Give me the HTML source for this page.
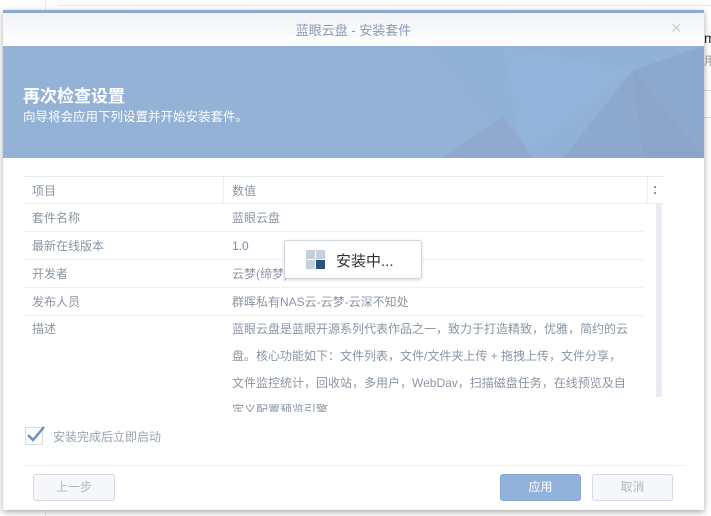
<!DOCTYPE html>
<html><head><meta charset="utf-8"><style>
*{box-sizing:border-box;margin:0;padding:0}
body{width:711px;height:516px;background:#fff;position:relative;overflow:hidden;font-family:"Liberation Sans","Noto Sans CJK SC",sans-serif;}
.abs{position:absolute}
.dlg{left:3px;top:10px;width:701px;height:500px;background:#fff;box-shadow:0 2px 6px rgba(0,0,0,.35);}
.row{position:absolute;left:21px;width:619px;height:28px;border-bottom:1px solid #eef0f3;font-size:12px;color:#8a95a3;line-height:28px}
.row .k{position:absolute;left:8px}
.row .v{position:absolute;left:208px}
.btn{position:absolute;top:464px;height:27px;border:1px solid #d5dbe2;border-radius:3px;background:#f5f7fa;font-size:12px;color:#b0b8c2;text-align:center;line-height:25px}
</style></head><body>
<div class="abs" style="left:45px;top:0;width:1px;height:516px;background:#e6e6e6"></div>
<div class="abs" style="left:58px;top:5px;width:660px;height:1px;background:#e3e6ea"></div>
<div class="abs" style="left:704px;top:30px;font-size:14px;color:#222">mp</div>
<div class="abs" style="left:704px;top:52px;font-size:12px;color:#999">用</div>
<div class="abs" style="left:704px;top:90px;width:7px;height:1px;background:#ddd"></div>
<div class="abs" style="left:704px;top:117px;width:7px;height:1px;background:#ddd"></div>
<div class="abs dlg">
 <div class="abs" style="left:0;top:0;width:701px;height:3px;background:#8fa9c8"></div>
 <div class="abs" style="left:0;top:3px;width:701px;height:33px;background:linear-gradient(#f0f3f7,#fff)"></div>
 <div class="abs" style="left:0;top:10px;width:701px;text-align:center;font-size:13px;color:#8a9bb3">蓝眼云盘 - 安装套件</div>
 <div class="abs" style="left:668px;top:8px;font-size:18px;color:#c8ced6">×</div>
 <div class="abs" style="left:0;top:36px;width:701px;height:112px;background:#94b2d6;overflow:hidden">
  <svg width="701" height="112" style="position:absolute;left:0;top:0">
   <polygon points="420,0 701,0 701,112 520,112" fill="#8fb0d6" opacity=".5"/>
   <polygon points="630,24 701,0 701,112 560,112" fill="#8ca8cc"/>
   <polygon points="630,24 701,112 640,112" fill="#8aa5c8"/>
   <polygon points="500,0 630,24 520,112" fill="#92b6dc" opacity=".6"/>
   <polygon points="440,112 500,70 530,112" fill="#8faacc"/>
  </svg>
  <div class="abs" style="left:20px;top:36px;font-size:17px;font-weight:bold;color:#fff">再次检查设置</div>
  <div class="abs" style="left:20px;top:60px;font-size:12.5px;color:#fff">向导将会应用下列设置并开始安装套件。</div>
 </div>
 <div class="abs" style="left:21px;top:166px;width:639px;height:1px;background:#e5e9ee"></div>
 <div class="row" style="top:167px;height:27px;width:639px"><span class="k">项目</span><span class="v">数值</span>
  <div class="abs" style="left:199px;top:0;width:1px;height:27px;background:#eef0f3"></div>
  <div class="abs" style="left:623px;top:0;width:1px;height:27px;background:#eef0f3"></div>
  <div class="abs" style="left:630px;top:9px;width:2px;height:8px;border-top:2px dotted #7d93b0;border-bottom:2px dotted #7d93b0"></div>
 </div>
 <div class="row" style="top:194px"><span class="k">套件名称</span><span class="v">蓝眼云盘</span></div>
 <div class="row" style="top:222px"><span class="k">最新在线版本</span><span class="v" style="color:#6f8bb0">1.0</span></div>
 <div class="row" style="top:250px"><span class="k">开发者</span><span class="v">云梦(缔梦)</span></div>
 <div class="row" style="top:278px"><span class="k">发布人员</span><span class="v">群晖私有NAS云-云梦-云深不知处</span></div>
 <div class="abs" style="left:21px;top:306px;width:619px;height:96px;overflow:hidden;font-size:12px;color:#8a95a3;line-height:27px">
  <span class="abs" style="left:8px;top:0">描述</span>
  <div class="abs" style="left:208px;top:0;width:420px;white-space:nowrap">蓝眼云盘是蓝眼开源系列代表作品之一，致力于打造精致，优雅，简约的云<br>盘。核心功能如下：文件列表，文件/文件夹上传 + 拖拽上传，文件分享，<br>文件监控统计，回收站，多用户，WebDav，扫描磁盘任务，在线预览及自<br>定义配置预览引擎</div>
 </div>
 <div class="abs" style="left:653px;top:193px;width:6px;height:194px;background:#e8ebef"></div>
 <div class="abs" style="left:22px;top:417px;width:18px;height:18px;border:1px solid #d5dbe2;background:#fff"></div>
 <svg class="abs" style="left:22px;top:414px" width="22" height="20"><path d="M3 11 L8 16 L19 3" stroke="#6f8fbf" stroke-width="2.5" fill="none"/></svg>
 <div class="abs" style="left:50px;top:418px;font-size:12px;color:#9aa3ae">安装完成后立即启动</div>
 <div class="abs" style="left:21px;top:455px;width:662px;height:1px;background:#eceff2"></div>
 <div class="btn" style="left:30px;width:82px">上一步</div>
 <div class="btn" style="left:497px;width:81px;background:#92b2db;border-color:#86a5cf;color:#fff">应用</div>
 <div class="btn" style="left:589px;width:81px">取消</div>
</div>
<div class="abs" style="left:284px;top:240px;width:138px;height:39px;background:#fff;border:1px solid #d0d6de;border-radius:3px;box-shadow:0 1px 3px rgba(0,0,0,.15)">
 <div class="abs" style="left:21px;top:9px;width:9px;height:9px;background:#c5cfdb"></div>
 <div class="abs" style="left:31px;top:9px;width:9px;height:9px;background:#c5cfdb"></div>
 <div class="abs" style="left:21px;top:19px;width:9px;height:9px;background:#c5cfdb"></div>
 <div class="abs" style="left:31px;top:19px;width:9px;height:9px;background:#2b5086"></div>
 <div class="abs" style="left:51px;top:9px;font-size:15px;color:#333">安装中...</div>
</div>
</body></html>
